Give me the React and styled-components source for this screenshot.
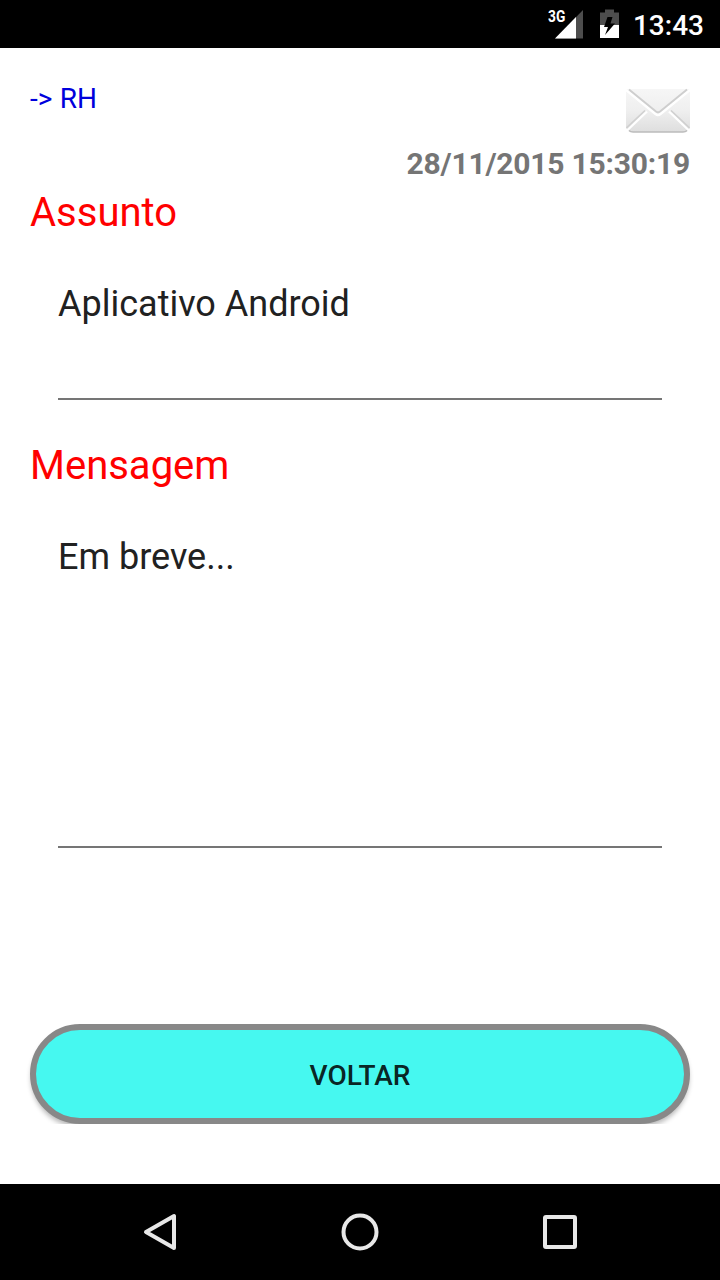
import React from 'react';
import styled, { createGlobalStyle } from 'styled-components';

const GlobalStyle = createGlobalStyle`
  * {
    box-sizing: border-box;
  }

  body {
    margin: 0;
    background-color: #ffffff;
    font-family: Roboto, 'Liberation Sans', sans-serif;
  }
`;

const Screen = styled.div`
  display: flex;
  flex-direction: column;
  width: 720px;
  height: 1280px;
  overflow: hidden;
`;

const StatusBar = styled.header`
  display: flex;
  align-items: center;
  justify-content: flex-end;
  height: 48px;
  padding-right: 16px;
  background-color: #000000;
  color: #ffffff;
`;

const StatusIcon = styled.svg`
  height: 48px;
  margin-right: ${({ $gap }) => $gap}px;
`;

const Network = styled.span`
  align-self: flex-start;
  width: 18px;
  margin: 8px -11px 0 0;
  font-size: 16px;
  font-weight: 700;
  line-height: 18px;
  transform: scaleX(0.86);
  transform-origin: left;
`;

const Clock = styled.time`
  font-size: 28px;
  font-weight: 500;
  line-height: 48px;
  padding-top: 4px;
`;

const Content = styled.main`
  flex: 1;
  display: flex;
  flex-direction: column;
  padding: 30px 30px 60px;
`;

const MessageHeader = styled.div`
  display: flex;
  justify-content: space-between;
  height: 64px;
`;

const Sender = styled.span`
  padding-top: 3px;
  color: #0000dc;
  font-size: 28px;
  line-height: 36px;
  letter-spacing: 0.1px;
`;

const SentAt = styled.time`
  margin-top: 4px;
  align-self: flex-end;
  color: #757575;
  font-size: 30px;
  font-weight: 700;
  line-height: 36px;
  letter-spacing: -0.22px;
`;

const Label = styled.h2`
  margin: ${({ $top }) => $top}px 0 46px;
  color: #ff0000;
  font-size: 40px;
  font-weight: 400;
  line-height: 48px;
`;

const Field = styled.div`
  height: ${({ $height }) => $height}px;
  margin: 0 28px;
  border-bottom: 2px solid #757575;
  color: #212121;
  font-size: 36px;
  line-height: 42px;
`;

const Footer = styled.div`
  margin-top: auto;
  clip-path: inset(-10px -10px 0 -10px);
`;

const BackButton = styled.button`
  display: block;
  width: 100%;
  height: 100px;
  padding: 2px 0 0;
  border: 6px solid #888888;
  border-radius: 50px;
  background-color: #46f8f0;
  box-shadow: 0 4px 5px -1px rgba(0, 0, 0, 0.28);
  color: rgba(0, 0, 0, 0.87);
  font-family: inherit;
  font-size: 28px;
  font-weight: 500;
`;

const NavBar = styled.nav`
  display: flex;
  align-items: center;
  justify-content: center;
  gap: 152px;
  height: 96px;
  background-color: #000000;
`;

const NavIcon = styled.svg`
  width: 48px;
  height: 48px;
  fill: none;
  stroke: #e8e8e8;
  stroke-width: 4;
  stroke-linejoin: round;
`;

function Envelope() {
  return (
    <svg width="64" height="64" viewBox="0 0 64 64" fill="none">
      <defs>
        <linearGradient id="paper" x1="0" y1="0" x2="0" y2="1">
          <stop offset="0" stopColor="#f6f6f6" />
          <stop offset="0.5" stopColor="#efefef" />
          <stop offset="1" stopColor="#dedede" />
        </linearGradient>
      </defs>
      <path d="M1 11 H63 L64 13 V50 L60 54 H4 L0 50 V13 Z" fill="url(#paper)" />
      {/* light edges of the folds, then their shadows */}
      <path d="M0 12 L29.5 36 Q32 38 34.5 36 L64 12" stroke="#ffffff" strokeWidth="2.4" />
      <path d="M1 52.5 L21 33.5 M63 52.5 L43 33.5" stroke="#ffffff" strokeWidth="2.4" />
      <path d="M3 11.5 L30 33.5 Q32 35 34 33.5 L61 11.5" stroke="#cecece" strokeWidth="1.8" />
      <path d="M0.5 50 L19 32.5 M63.5 50 L45 32.5" stroke="#d0d0d0" strokeWidth="1.6" />
      <path d="M3 52.5 Q4.5 54 7 54 H57 Q59.5 54 61 52.5" stroke="#bcbcbc" strokeWidth="1.6" />
    </svg>
  );
}

function App() {
  return (
    <>
      <GlobalStyle />
      <Screen>
        <StatusBar>
          <Network>3G</Network>
          <StatusIcon $gap={17} width="28" viewBox="0 0 28 48">
            <path d="M28 10 V38.5 H0 Z" fill="#4d4d4d" />
            <path d="M21 17 V38.5 H0 Z" fill="#ffffff" />
          </StatusIcon>
          <StatusIcon $gap={14} width="19" viewBox="0 0 19 48">
            <path d="M0 12.5 H5 V9.5 H14 V12.5 H19 V25 H0 Z" fill="#4d4d4d" />
            <path d="M0 25 H19 V38 H0 Z" fill="#ffffff" />
            <path d="M7.5 17 H12.5 L10.5 23.5 H15 L5 35 L8 27 H4 Z" fill="#000000" />
          </StatusIcon>
          <Clock>13:43</Clock>
        </StatusBar>
        <Content>
          <MessageHeader>
            <Sender>{'-> RH'}</Sender>
            <Envelope />
          </MessageHeader>
          <SentAt>28/11/2015 15:30:19</SentAt>
          <Label $top={7}>Assunto</Label>
          <Field $height={117}>Aplicativo Android</Field>
          <Label $top={42}>Mensagem</Label>
          <Field $height={312}>Em breve...</Field>
          <Footer>
            <BackButton type="button">VOLTAR</BackButton>
          </Footer>
        </Content>
        <NavBar>
          <NavIcon viewBox="0 0 48 48">
            <path d="M10 24 L38 8 V40 Z" />
          </NavIcon>
          <NavIcon viewBox="0 0 48 48">
            <circle cx="24" cy="24" r="16.5" />
          </NavIcon>
          <NavIcon viewBox="0 0 48 48">
            <rect x="9" y="9" width="30" height="30" rx="1" />
          </NavIcon>
        </NavBar>
      </Screen>
    </>
  );
}

export default App;
